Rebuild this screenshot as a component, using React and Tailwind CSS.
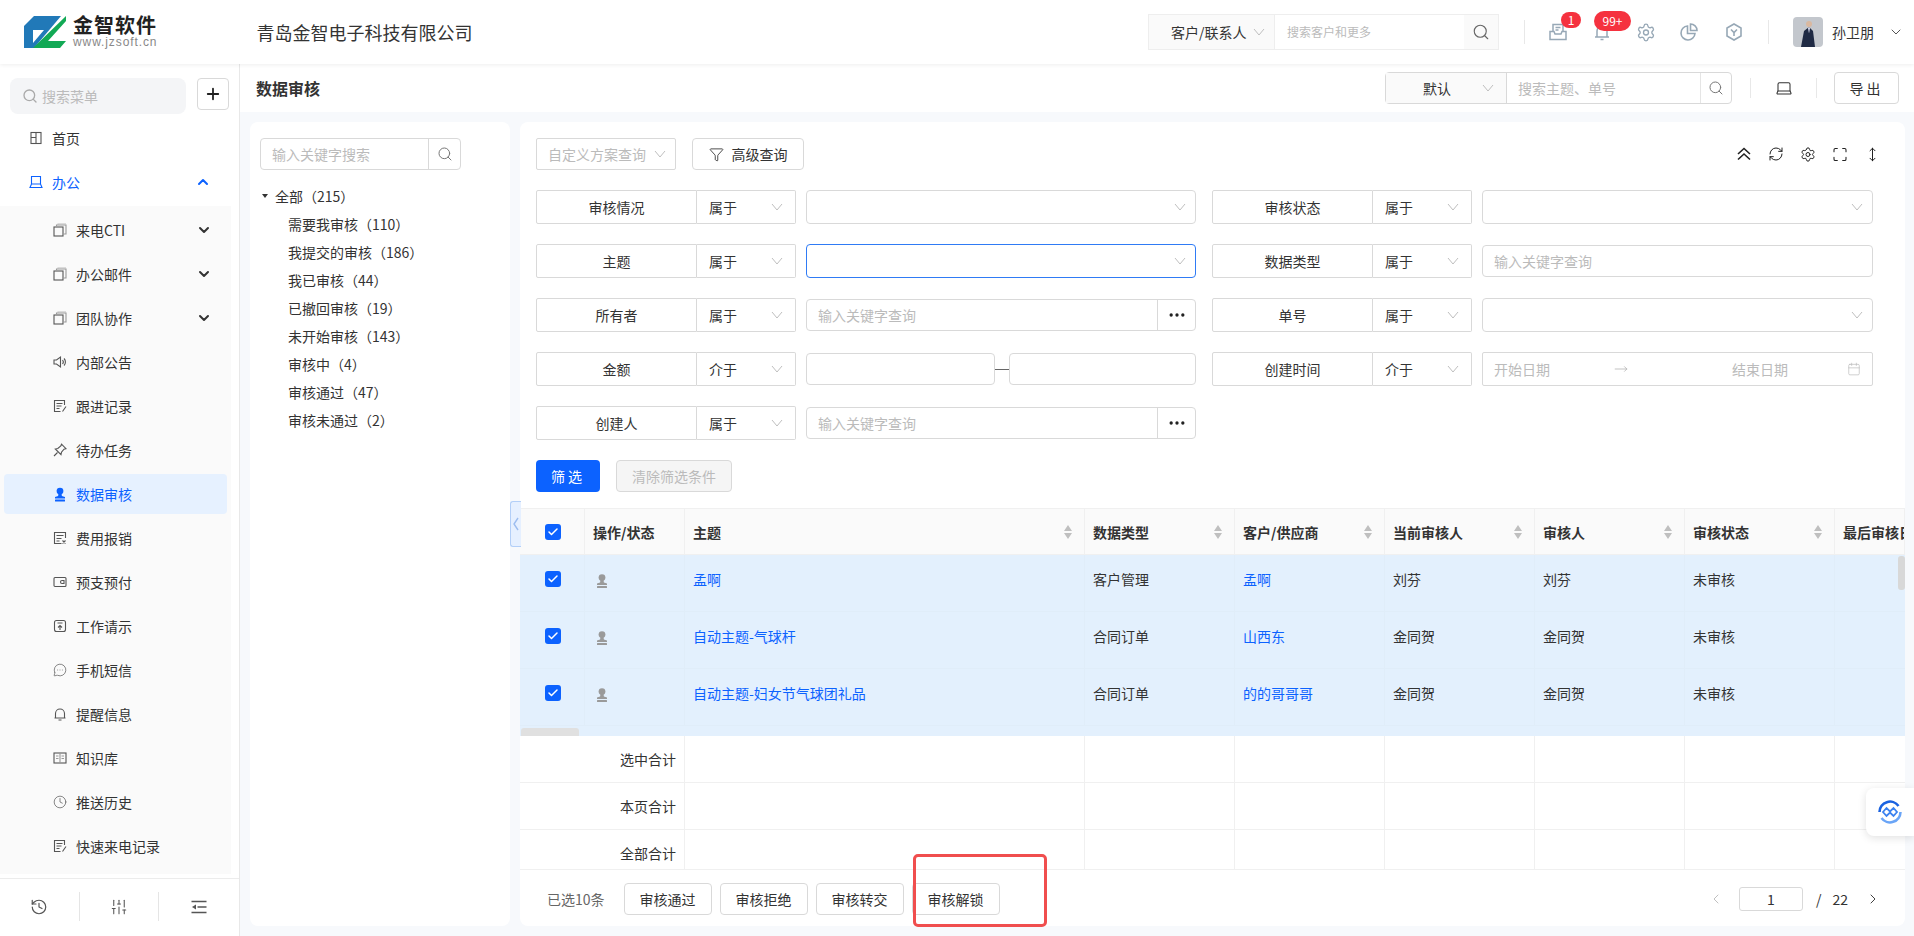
import { Search, Plus, ChevronUp, ChevronDown, ChevronLeft, ChevronRight, MessageCircleMore, Clock, History, SlidersVertical, Settings, Laptop, Funnel, RefreshCw, Maximize, MoveVertical, Calendar, MoveRight, Ellipsis, Check } from "lucide-react";

const font = { fontFamily: '"Noto Sans CJK SC", "Liberation Sans", sans-serif' };

const Logo = () => (
  <svg width="42" height="32" viewBox="0 0 42 32">
    <path d="M0 10 10 0h27L10 32H0z" fill="#2179b8" />
    <path d="M9 14h11L9 27z" fill="#fff" />
    <path d="M42 0 9 32h27l6-7H24L42 5z" fill="#12a955" />
  </svg>
);

// small menu icons, all on a 14 grid
const Line = ({ className, children }) => (
  <svg className={className} viewBox="0 0 14 14" fill="none" stroke="currentColor" strokeWidth="1.1">{children}</svg>
);

const StampIcon = ({ className }) => (
  <svg className={className} viewBox="0 0 14 14" fill="currentColor">
    <circle cx="7" cy="3.6" r="3.400" />
    <path d="M5.500 6h3l.4 2.600 3.100.9V11H2V9.500l3.100-.9z" />
    <rect x="2" y="11.900" width="10" height="2" rx=".5" />
  </svg>
);
const HomeIcon = ({ className }) => (
  <Line className={className}><rect x="2" y="1.500" width="10" height="11" /><path d="M7 1.500v11M2 6.500h5" /></Line>
);
const OfficeIcon = ({ className }) => (
  <Line className={className}><path d="M2.500 9V1.500h9V9M2.500 9h9l1.500 3.500H1z" /></Line>
);
const CopyIcon = ({ className }) => (
  <Line className={className}><rect x="1" y="4" width="9" height="9" /><path d="M3.500 3.500V2h9.500v9h-2.500" stroke="#999" /><path d="M5 2V1h8" stroke="#bbb" /></Line>
);
const SpeakerIcon = ({ className }) => (
  <Line className={className}><path d="M1 5h2.500L7.500 2v10l-4-3H1z" /><path d="M9.500 5a3 3 0 0 1 0 4M11 3.500a5 5 0 0 1 0 7" /></Line>
);
const NoteIcon = ({ className }) => (
  <Line className={className}><path d="M11.500 6V1.500h-10v11h6" /><path d="M3.500 4.500h6M3.500 7h5M3.500 9.500h3M13 7.500 9.500 12.500" /></Line>
);
const PinIcon = ({ className }) => (
  <Line className={className}><path d="M8.500 1.200 13 5.700l-2 .5-2.500 3-.5 2.500L2.300 6l2.500-.5 3-2.500zM4.500 9.500 1 13" /></Line>
);
const ExpenseIcon = ({ className }) => (
  <Line className={className}><path d="M12.500 7V1.500h-11v11h7" /><path d="M3.500 4.500h7M3.500 7.500h5M3.500 10h3M9.500 9.500l3 3M12.500 9.500l-3 3" /></Line>
);
const WalletIcon = ({ className }) => (
  <Line className={className}><rect x="1" y="2.500" width="12" height="9" rx="1" /><path d="M11 5.500H9a1.500 1.500 0 0 0 0 3h2z" /></Line>
);
const RequestIcon = ({ className }) => (
  <Line className={className}><rect x="1.500" y="1.500" width="11" height="11" rx="2" /><path d="M4.500 4h5M7 11V6.500M5 8.500l2-2 2 2" /></Line>
);
const BellIcon = ({ className }) => (
  <Line className={className}><path d="M2.500 11V6.500a4.500 4.500 0 0 1 9 0V11zM1.500 11h11M5.500 13h3" /></Line>
);
const BookIcon = ({ className }) => (
  <Line className={className}><rect x="1" y="2" width="12" height="10" /><path d="M7 2v10M3 5h2.500M8.500 5H11M3 7.500h2.500M8.500 7.500H11" stroke="#999" /></Line>
);

const HeadIcon = ({ children, sw = 1.5 }) => (
  <svg width="18" height="18" viewBox="0 0 18 18" fill="none" stroke="#97a8b6" strokeWidth={sw}>{children}</svg>
);

const SortCaret = () => (
  <svg width="8" height="14" viewBox="0 0 8 14" fill="#bfbfbf"><path d="M4 0 8 6H0zM4 14 0 8h8z" /></svg>
);

const ChevronThin = ({ className = "" }) => (
  <svg className={className} width="12" height="8" viewBox="0 0 12 8" fill="none" stroke="#bfbfbf" strokeWidth="1"><path d="M1 1l5 6 5-6" /></svg>
);

const CheckBox = () => (
  <span className="flex h-4 w-4 items-center justify-center rounded-[3px] bg-[#0c62ff]">
    <Check size={12} strokeWidth={3} className="text-white" />
  </span>
);

const officeItems = [
  { label: "来电CTI", icon: CopyIcon, arrow: true },
  { label: "办公邮件", icon: CopyIcon, arrow: true },
  { label: "团队协作", icon: CopyIcon, arrow: true },
  { label: "内部公告", icon: SpeakerIcon },
  { label: "跟进记录", icon: NoteIcon },
  { label: "待办任务", icon: PinIcon },
  { label: "数据审核", icon: StampIcon, active: true },
  { label: "费用报销", icon: ExpenseIcon },
  { label: "预支预付", icon: WalletIcon },
  { label: "工作请示", icon: RequestIcon },
  { label: "手机短信", icon: MessageCircleMore },
  { label: "提醒信息", icon: BellIcon },
  { label: "知识库", icon: BookIcon },
  { label: "推送历史", icon: Clock },
  { label: "快速来电记录", icon: NoteIcon },
];

const treeItems = ["需要我审核（110）", "我提交的审核（186）", "我已审核（44）", "已撤回审核（19）", "未开始审核（143）", "审核中（4）", "审核通过（47）", "审核未通过（2）"];

const columns = "grid-cols-[65px_100px_400px_150px_150px_150px_150px_150px_70px]";

const headers = [
  { label: "" },
  { label: "操作/状态" },
  { label: "主题", sort: true },
  { label: "数据类型", sort: true },
  { label: "客户/供应商", sort: true },
  { label: "当前审核人", sort: true },
  { label: "审核人", sort: true },
  { label: "审核状态", sort: true },
  { label: "最后审核日期" },
];

const rows = [
  ["孟啊", "客户管理", "孟啊", "刘芬", "刘芬", "未审核"],
  ["自动主题-气球杆", "合同订单", "山西东", "金同贺", "金同贺", "未审核"],
  ["自动主题-妇女节气球团礼品", "合同订单", "的的哥哥哥", "金同贺", "金同贺", "未审核"],
];

function Sidebar() {
  return (
    <aside className="flex w-[240px] shrink-0 flex-col border-r border-[#e8e8e8] bg-white">
      <div className="flex items-start pl-[10px] pt-[14px]">
        <div className="flex h-9 w-[176px] items-center gap-[4px] rounded-lg bg-[#f4f5f7] pl-3 text-sm text-[#bbb]">
          <Search size={16} className="text-[#aaa]" />
          搜索菜单
        </div>
        <button className="ml-[11px] flex h-8 w-8 items-center justify-center rounded-[4px] border border-[#d9d9d9]">
          <Plus size={18} strokeWidth={2.4} className="text-[#222]" />
        </button>
      </div>
      <div className="mt-[2px] flex h-11 items-center pl-[29px] text-sm text-[#333]">
        <HomeIcon className="h-[14px] w-[14px] text-[#555]" />
        <span className="ml-[9px]">首页</span>
      </div>
      <div className="flex h-11 items-center pl-[29px] text-sm text-[#0c62ff]">
        <OfficeIcon className="h-[14px] w-[14px]" />
        <span className="ml-[9px]">办公</span>
        <ChevronUp size={16} strokeWidth={3} className="ml-[115px]" />
      </div>
      <div className="mt-[2px] w-[231px] bg-[#fafafa] pb-[6px] pt-[2px]">
        {officeItems.map((item) => (
          <div key={item.label} className="flex h-11 items-center py-[2px] pl-1 pr-1">
            <div className={`flex h-10 w-[223px] items-center rounded-[4px] pl-[49px] text-sm ${item.active ? "bg-[#e6f1ff] text-[#0c62ff]" : "text-[#333]"}`}>
              <item.icon className={item.active ? "h-[15px] w-[14px]" : "h-[14px] w-[14px] text-[#555]"} size={14} strokeWidth={1.2} />
              <span className="ml-[9px]">{item.label}</span>
              {item.arrow && <ChevronDown size={16} strokeWidth={3} className="absolute left-[196px] text-[#333]" />}
            </div>
          </div>
        ))}
      </div>
      <div className="mt-1 flex flex-1 items-center border-t border-[#ececec] pb-[2px]">
        <div className="flex h-[29px] w-[80px] items-center justify-center border-r border-[#e5e5e5]">
          <History size={18} strokeWidth={1.6} className="text-[#555]" />
        </div>
        <div className="flex h-[29px] w-[80px] items-center justify-center border-r border-[#e5e5e5]">
          <SlidersVertical size={18} strokeWidth={1.4} className="text-[#555]" />
        </div>
        <div className="flex h-[29px] w-[80px] items-center justify-center">
          <svg width="18" height="18" viewBox="0 0 18 18" fill="none" stroke="#555" strokeWidth="1.3">
            <path d="M1.500 3.500h15M7.500 9h9M1.500 14.500h15" />
            <path d="M6 6.500v5L2 9z" fill="#555" stroke="none" />
          </svg>
        </div>
      </div>
    </aside>
  );
}

function Header() {
  return (
    <header className="relative z-10 flex h-16 shrink-0 items-center bg-white shadow-[0_1px_4px_rgba(0,0,0,0.07)]">
      <div className="ml-6 flex items-center">
        <Logo />
        <div className="ml-[7px] flex flex-col">
          <span className="h-5 text-[20px] font-bold leading-[20px] tracking-[1px] text-[#222]">金智软件</span>
          <span className="mt-px font-['Liberation_Sans'] text-[12px] leading-[13px] tracking-[0.9px] text-[#888]">www.jzsoft.cn</span>
        </div>
      </div>
      <h1 className="ml-[99px] text-[18px] text-[#333]">青岛金智电子科技有限公司</h1>
      <div className="ml-auto flex items-center">
        <div className="flex h-9 w-[351px] items-center border border-[#eee] text-sm">
          <div className="flex h-full w-[125px] items-center bg-[#fafafa] pl-[22px] text-[#333]">
            客户/联系人
            <ChevronThin className="ml-[6px]" />
          </div>
          <div className="flex h-full flex-1 items-center border-l border-[#eee] pl-3 text-xs text-[#bbb]">搜索客户和更多</div>
          <div className="flex h-full w-[34px] items-center justify-center bg-[#fafafa]">
            <Search size={18} strokeWidth={1.5} className="text-[#666]" />
          </div>
        </div>
        <div className="ml-[25px] h-6 w-px bg-[#e8e8e8]" />
        <div className="relative ml-[24px] h-[18px] w-[18px]">
          <HeadIcon>
            <path d="M4 9V1.500h10V9M6.500 4.500h5M6.500 7h3" />
            <path d="M1 8.500v8h16v-8h-4l-1 2.500H6L5 8.500z" />
          </HeadIcon>
          <span className="absolute -top-[11px] left-[12px] flex h-4 w-5 items-center justify-center rounded-full bg-[#f5323f] text-xs text-white">1</span>
        </div>
        <div className="relative ml-[27px] h-[18px] w-4">
          <HeadIcon>
            <path d="M3 14V8a5 5 0 0 1 10 0v6zM1 14h14M6.500 16.500h3" />
          </HeadIcon>
          <span className="absolute -top-[12px] left-0 flex h-5 w-[37px] items-center justify-center rounded-full bg-[#f5323f] text-xs text-white">99+</span>
        </div>
        <span className="ml-[26px] flex w-5 justify-center"><Settings size={21} strokeWidth={1.6} className="text-[#97a8b6]" /></span>
        <div className="ml-[24px] h-[18px] w-[18px]">
          <HeadIcon sw={1.6}>
            <path d="M7.500 3a7 7 0 1 0 7.500 7.500H7.500z" />
            <path d="M10.500 1a6.500 6.500 0 0 1 6.500 6.500h-6.500z" />
          </HeadIcon>
        </div>
        <div className="ml-[27px] h-[18px] w-[18px]">
          <HeadIcon sw={1.6}>
            <path d="M9 1l7 4v8l-7 4-7-4V5z" />
            <path d="M6 6.500l3 3 3-3M9 9.500V13" />
          </HeadIcon>
        </div>
        <div className="ml-[25px] h-6 w-px bg-[#e8e8e8]" />
        <svg className="ml-[24px] rounded-[4px]" width="30" height="30" viewBox="0 0 30 30">
          <rect width="30" height="30" fill="#c3c7cd" />
          <circle cx="16" cy="7" r="3" fill="#d9b8a0" />
          <path d="M8 30l3-16 5-4 4 4 2 16z" fill="#1f2a44" />
          <path d="M15 10.500h2l-1 6z" fill="#eef" />
        </svg>
        <span className="ml-[9px] text-sm text-[#333]">孙卫朋</span>
        <ChevronDown size={16} strokeWidth={1.5} className="ml-[14px] mr-[10px] text-[#555]" />
      </div>
    </header>
  );
}

function TitleBar() {
  return (
    <div className="flex h-12 shrink-0 items-center bg-white pl-4 pr-4">
      <h2 className="text-base font-bold text-[#333]">数据审核</h2>
      <div className="ml-auto flex items-center">
        <div className="flex h-8 w-[347px] items-center rounded-[4px] border border-[#d9d9d9] text-sm">
          <div className="flex h-full w-[120px] items-center bg-[#fafafa] pl-[37px] text-[#333]">
            默认
            <ChevronThin className="ml-[31px]" />
          </div>
          <div className="flex h-full flex-1 items-center border-l border-[#d9d9d9] pl-[11px] text-[#bbb]">搜索主题、单号</div>
          <div className="flex h-full w-[31px] items-center justify-center border-l border-[#e5e5e5]">
            <Search size={16} strokeWidth={1.5} className="text-[#777]" />
          </div>
        </div>
        <div className="ml-[18px] h-5 w-px bg-[#e8e8e8]" />
        <Laptop size={18} strokeWidth={1.4} className="ml-[24px] text-[#333]" />
        <div className="ml-[23px] h-5 w-px bg-[#e8e8e8]" />
        <button className="ml-[17px] h-8 w-[65px] rounded-[4px] border border-[#d9d9d9] text-sm tracking-[3px] text-[#333]">导出</button>
      </div>
    </div>
  );
}

function Tree() {
  return (
    <div className="w-[260px] shrink-0 rounded-lg bg-white px-[10px] pt-4 text-sm text-[#333]">
      <div className="flex h-8 w-[201px] items-center rounded-[4px] border border-[#d9d9d9]">
        <span className="flex-1 pl-[11px] text-[#bbb]">输入关键字搜索</span>
        <span className="flex h-full w-[32px] items-center justify-center border-l border-[#d9d9d9]">
          <Search size={16} strokeWidth={1.5} className="text-[#777]" />
        </span>
      </div>
      <div className="mt-3">
        <div className="flex h-7 items-center pl-[2px]">
          <span className="h-0 w-0 border-x-[3.5px] border-t-[4px] border-x-transparent border-t-[#333]" />
          <span className="ml-[7px]">全部（215）</span>
        </div>
        {treeItems.map((t) => (
          <div key={t} className="flex h-7 items-center pl-[28px]">{t}</div>
        ))}
      </div>
    </div>
  );
}

function FilterRow({ label, op = "属于", children }) {
  return (
    <div className="flex h-[34px] items-center text-sm text-[#333]">
      <div className="flex h-full w-[161px] items-center justify-center rounded-l-[2px] border border-[#d9d9d9]">{label}</div>
      <div className="flex h-full w-[99px] items-center justify-between rounded-r-[2px] border border-l-0 border-[#d9d9d9] pl-[12px] pr-[12px]">
        {op}
        <ChevronThin />
      </div>
      <div className="ml-[10px] flex-1">{children}</div>
    </div>
  );
}

const SelectBox = ({ focus }) => (
  <div className={`flex h-[34px] items-center justify-end rounded-[4px] border pr-[9px] ${focus ? "border-[#2f7bf5]" : "border-[#d9d9d9]"}`}>
    <ChevronThin />
  </div>
);

const KeywordBox = ({ more }) => (
  <div className="flex h-8 items-center rounded-[4px] border border-[#d9d9d9] text-[#bbb]">
    <span className="flex-1 pl-[11px]">输入关键字查询</span>
    {more && (
      <span className="flex h-full w-[38px] items-center justify-center border-l border-[#d9d9d9]">
        <Ellipsis size={20} strokeWidth={2} className="text-[#222]" />
      </span>
    )}
  </div>
);

function Filters() {
  return (
    <div className="px-4 pt-4">
      <div className="flex items-center">
        <div className="flex h-8 w-[140px] items-center justify-between rounded-[2px] border border-[#d9d9d9] pl-[11px] pr-[9px] text-sm text-[#bbb]">
          自定义方案查询
          <ChevronThin />
        </div>
        <button className="ml-4 flex h-8 w-[112px] items-center justify-center gap-2 rounded-[4px] border border-[#d9d9d9] text-sm text-[#333]">
          <Funnel size={15} strokeWidth={1.4} />
          高级查询
        </button>
        <div className="ml-auto mr-[9px] flex items-center gap-[16px] text-[#222]">
          <svg width="16" height="16" viewBox="0 0 16 16" fill="none" stroke="currentColor" strokeWidth="1.6"><path d="M2 8 8 2.500 14 8M2 13.500 8 8l6 5.500" /></svg>
          <span className="flex w-4 justify-center"><RefreshCw size={16} strokeWidth={1.5} /></span>
          <span className="flex w-4 justify-center"><Settings size={17} strokeWidth={1.5} /></span>
          <span className="flex w-4 justify-center"><Maximize size={17} strokeWidth={1.6} /></span>
          <span className="flex w-4 justify-center"><MoveVertical size={15} strokeWidth={1.6} /></span>
        </div>
      </div>
      <div className="mt-5 grid grid-cols-[660px_661px] gap-x-4 gap-y-5">
        <FilterRow label="审核情况"><SelectBox /></FilterRow>
        <FilterRow label="审核状态"><SelectBox /></FilterRow>
        <FilterRow label="主题"><SelectBox focus /></FilterRow>
        <FilterRow label="数据类型"><KeywordBox /></FilterRow>
        <FilterRow label="所有者"><KeywordBox more /></FilterRow>
        <FilterRow label="单号"><SelectBox /></FilterRow>
        <FilterRow label="金额" op="介于">
          <div className="flex items-center">
            <div className="h-8 w-[189px] rounded-[4px] border border-[#d9d9d9]" />
            <div className="h-px w-[14px] bg-[#666]" />
            <div className="h-8 flex-1 rounded-[4px] border border-[#d9d9d9]" />
          </div>
        </FilterRow>
        <FilterRow label="创建时间" op="介于">
          <div className="flex h-[34px] items-center rounded-[2px] border border-[#d9d9d9] pl-[11px] pr-[11px] text-sm text-[#bbb]">
            <span>开始日期</span>
            <MoveRight size={14} strokeWidth={1.2} className="ml-[64px] text-[#aaa]" />
            <span className="ml-[104px]">结束日期</span>
            <Calendar size={14} strokeWidth={1.2} className="ml-auto text-[#bbb]" />
          </div>
        </FilterRow>
        <FilterRow label="创建人"><KeywordBox more /></FilterRow>
      </div>
      <div className="mt-5 flex items-center">
        <button className="h-8 w-16 rounded-[4px] bg-[#0c62ff] text-sm tracking-[3px] text-white">筛选</button>
        <button className="ml-4 h-8 w-[116px] rounded-[4px] border border-[#d9d9d9] bg-[#f5f5f5] text-sm text-[#bbb]">清除筛选条件</button>
      </div>
    </div>
  );
}

function Grid() {
  return (
    <div className="relative mt-4 h-[362px] overflow-hidden text-sm text-[#333]">
      <div className={`grid h-[47px] ${columns} border-y border-[#f0f0f0] bg-[#fafafa] font-semibold`}>
        {headers.map((h, i) => (
          <div key={i} className={`flex items-center overflow-hidden whitespace-nowrap border-r border-[#f0f0f0] ${i === 0 ? "justify-center pl-px" : "justify-between pl-2 pr-3"}`}>
            {i === 0 ? <CheckBox /> : h.label}
            {h.sort && <SortCaret />}
          </div>
        ))}
      </div>
      {rows.map((row, r) => (
        <div key={r} className={`grid h-[57px] ${columns} border-b border-[#e0edf9] bg-[#e3f0fd]`}>
          <div className="flex justify-center border-r border-[#e0edf9] pl-px pt-4"><CheckBox /></div>
          <div className="border-r border-[#e0edf9] pl-[10px] pt-[18px] text-[#9a9a9a]"><StampIcon className="h-4 w-[14px]" /></div>
          {row.map((cell, c) => (
            <div key={c} className={`border-r border-[#e0edf9] pl-2 pt-[13px] leading-[22px] ${c === 0 || c === 2 ? "text-[#0c62ff]" : ""}`}>{cell}</div>
          ))}
          <div />
        </div>
      ))}
      <div className="h-[10px] bg-[#e3f0fd]" />
      {["选中合计", "本页合计", "全部合计"].map((s, i) => (
        <div key={s} className={`grid ${i === 2 ? "h-[40px]" : "h-[47px]"} ${columns} border-b border-[#f0f0f0]`}>
          <div className="col-span-2 border-r border-[#f0f0f0] pr-2 pt-3 text-right leading-[22px]">{s}</div>
          {[0, 1, 2, 3, 4, 5].map((n) => <div key={n} className="border-r border-[#f0f0f0]" />)}
          <div />
        </div>
      ))}
      <div className="absolute left-[1px] top-[220px] h-2 w-[58px] rounded-t-[3px] bg-[#e0e0e0]" />
      <div className="absolute right-0 top-[48px] h-[34px] w-[7px] rounded-[3px] bg-[#d8d8d8]" />
    </div>
  );
}

function Footer() {
  return (
    <div className="flex flex-1 items-center pl-[27px] pr-[24px] pt-[2px] text-sm text-[#333]">
      <span className="text-[#666]">已选10条</span>
      <div className="ml-[19px] flex gap-2">
        {["审核通过", "审核拒绝", "审核转交", "审核解锁"].map((b) => (
          <button key={b} className="h-8 w-[88px] rounded-[4px] border border-[#d9d9d9] bg-white text-sm">{b}</button>
        ))}
      </div>
      <div className="ml-auto flex items-center">
        <ChevronLeft size={16} strokeWidth={1.4} className="text-[#bbb]" />
        <div className="ml-[15px] flex h-6 w-[64px] items-center justify-center rounded-[3px] border border-[#d9d9d9]">1</div>
        <span className="ml-[13px]">/</span>
        <span className="ml-[11px]">22</span>
        <ChevronRight size={16} strokeWidth={1.4} className="ml-[17px]" />
      </div>
    </div>
  );
}

export default function App() {
  return (
    <div style={font} className="relative flex h-[936px] w-[1914px] flex-col overflow-hidden bg-white">
      <Header />
      <div className="relative flex flex-1 overflow-hidden">
        <Sidebar />
        <main className="flex flex-1 flex-col bg-[#f7f9fc]">
          <TitleBar />
          <div className="flex flex-1 gap-[10px] overflow-hidden px-[10px] pb-[10px] pt-[10px]">
            <Tree />
            <div className="flex flex-1 flex-col overflow-hidden rounded-lg bg-white">
              <Filters />
              <Grid />
              <Footer />
            </div>
          </div>
        </main>
      </div>
      {/* annotation and floating bits that sit over the page */}
      <div className="absolute left-[510px] top-[501px] flex h-[46px] w-[11px] items-center justify-center rounded-l-[3px] border border-r-0 border-[#b3cff8] bg-[#e6f0ff]">
        <svg width="6" height="14" viewBox="0 0 6 14" fill="none" stroke="#9dbdf0" strokeWidth="1.4"><path d="M5 1 1 7l4 6" /></svg>
      </div>
      <div className="absolute left-[913px] top-[854px] h-[73px] w-[134px] rounded-[5px] border-[3px] border-[#f04e4e]" />
      <div className="absolute left-[1866px] top-[788px] flex h-12 w-12 items-center justify-center rounded-l-lg bg-white shadow-[0_2px_8px_rgba(0,0,0,0.12)]">
        <svg width="24" height="24" viewBox="0 0 24 24" fill="none" strokeWidth="2.600">
          <path d="M1.500 12a10.500 10.500 0 0 1 19-6" stroke="#1a62e0" />
          <path d="M22.500 12a10.500 10.500 0 0 1-19 6" stroke="#6aa5f7" />
          <path d="M5 12l3.500-4 3.500 3.500L15.500 8 19 12l-3.500 4-3.500-3.500L8.500 16z" stroke="#3b82f0" strokeWidth="1.800" />
        </svg>
      </div>
    </div>
  );
}
